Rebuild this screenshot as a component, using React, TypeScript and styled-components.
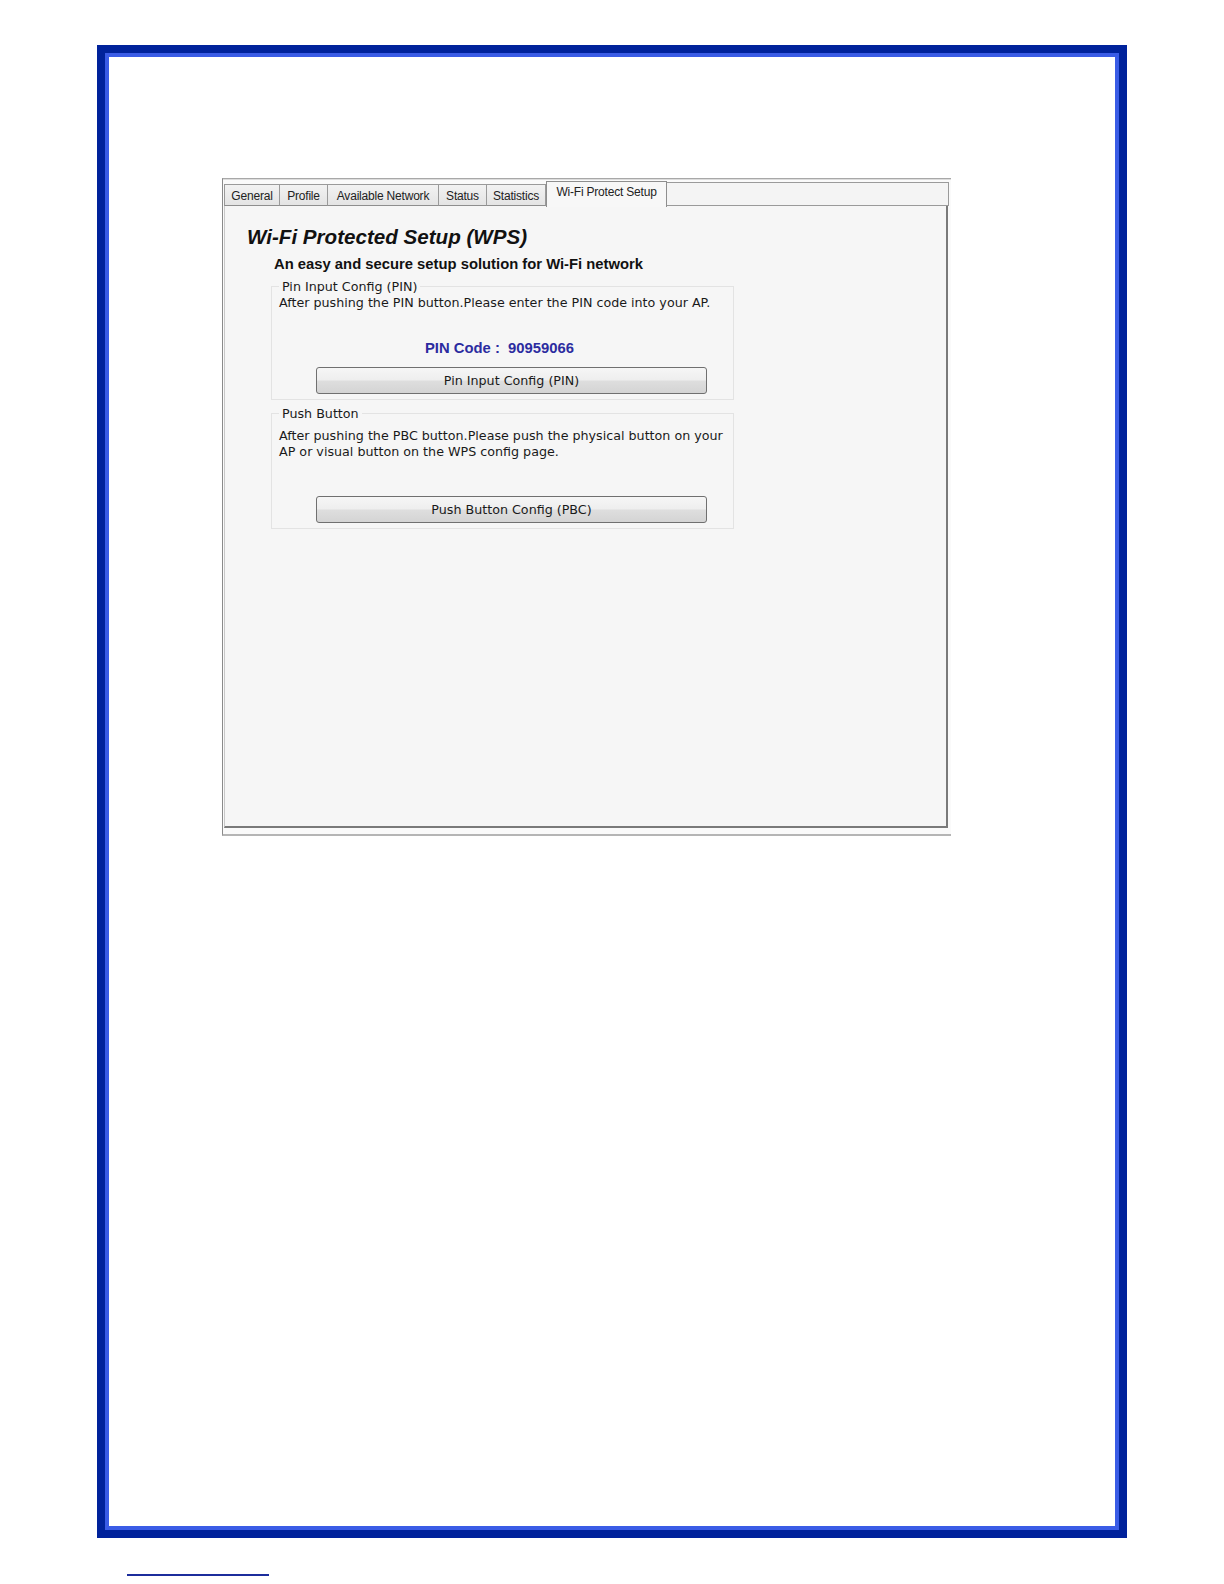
import React from "react";
import styled, { createGlobalStyle } from "styled-components";

const Global = createGlobalStyle`
  html, body { margin: 0; padding: 0; background: #ffffff; }
  #root { width: 1224px; }
`;

const Page = styled.div`
  width: 1224px;
  height: 1584px;
  box-sizing: border-box;
  padding: 45px 0 0 97px;
  background: #ffffff;
  display: flex;
  flex-direction: column;
`;

const Frame = styled.div`
  width: 1030px;
  height: 1493px;
  box-sizing: border-box;
  border: 8px solid #00229b;
  box-shadow: inset 0 0 0 4px #3a5ce6;
  padding: 125px 0 0 117px;
  background: #ffffff;
`;

const Window = styled.div`
  width: 729px;
  height: 658px;
  box-sizing: border-box;
  border-top: 1px solid #a8a8a8;
  box-shadow: inset 0 1px 0 #dcdcdc;
  border-left: 1px solid #8a8a8a;
  border-bottom: 2px solid #b5b5b5;
  padding: 0 2px 6px 1px;
  display: flex;
  flex-direction: column;
  background: #fafafa;
`;

const TabStrip = styled.div`
  height: 27px;
  display: flex;
  align-items: flex-end;
  font-family: "Liberation Sans", Arial, sans-serif;
`;

const Tab = styled.div<{ $w: number; $active?: boolean; $first?: boolean }>`
  width: ${(p) => p.$w}px;
  height: ${(p) => (p.$active ? 26 : 22)}px;
  box-sizing: border-box;
  border: 1px solid ${(p) => (p.$active ? "#8e8e8e" : "#9a9a9a")};
  border-bottom: ${(p) => (p.$active ? "none" : "1px solid #8e8e8e")};
  border-left-style: ${(p) => (p.$first || p.$active ? "solid" : "none")};
  background: ${(p) =>
    p.$active ? "#f7f7f7" : "linear-gradient(#f2f2f2, #e4e4e4)"};
  font-size: 12px;
  letter-spacing: -0.2px;
  color: #222;
  display: flex;
  align-items: ${(p) => (p.$active ? "flex-start" : "center")};
  padding-top: ${(p) => (p.$active ? 3 : 1)}px;
  justify-content: center;
  white-space: nowrap;
  margin-bottom: ${(p) => (p.$active ? -1 : 0)}px;
  position: relative;
  z-index: ${(p) => (p.$active ? 1 : 0)};
`;

const StripRest = styled.div`
  flex: 1;
  height: 24px;
  box-sizing: border-box;
  border: 1px solid #9a9a9a;
  border-left: none;
  background: #f4f4f4;
`;

const Body = styled.div`
  flex: 1;
  box-sizing: border-box;
  background: #f6f6f6;
  border-left: 1px solid #c8c8c8;
  border-right: 2px solid #7a7a7a;
  border-bottom: 2px solid #7a7a7a;
  margin-right: 1px;
  padding: 19px 0 0 22px;
  display: flex;
  flex-direction: column;
`;

const Title = styled.h1`
  margin: 0;
  font-family: "Liberation Sans", Arial, sans-serif;
  font-weight: bold;
  font-style: italic;
  font-size: 20.6px;
  line-height: 24px;
  color: #111;
`;

const Subtitle = styled.div`
  margin: 6px 0 0 27px;
  font-family: "Liberation Sans", Arial, sans-serif;
  font-weight: bold;
  font-size: 14.8px;
  line-height: 18px;
  color: #111;
`;

const Group = styled.fieldset<{ $h: number; $mt: number }>`
  margin: ${(p) => p.$mt}px 0 0 24px;
  width: 463px;
  height: ${(p) => p.$h}px;
  box-sizing: border-box;
  border: 1px solid #e3e3e3;
  padding: 0 6px 6px 7px;
  display: flex;
  flex-direction: column;
  font-family: "DejaVu Sans", Verdana, sans-serif;
  font-size: 12.7px;
  color: #1a1a1a;
`;

const Legend = styled.legend`
  padding: 0 3px;
  margin-left: 0;
  font-size: 12.7px;
  line-height: 15px;
  white-space: nowrap;
`;

const Desc = styled.div<{ $mt: number }>`
  margin-top: ${(p) => p.$mt}px;
  line-height: 16px;
  white-space: nowrap;
`;

const PinRow = styled.div`
  margin: 28px 0 0 146px;
  font-family: "Liberation Sans", Arial, sans-serif;
  font-weight: bold;
  font-size: 14.8px;
  line-height: 18px;
  color: #2c2ca0;
  white-space: pre;
`;

const Button = styled.button<{ $mt: number }>`
  margin: ${(p) => p.$mt}px 0 0 37px;
  width: 391px;
  height: 27px;
  box-sizing: border-box;
  border: 1px solid #707070;
  border-radius: 3px;
  background: linear-gradient(#f6f6f6 0%, #eeeeee 48%, #dedede 52%, #d4d4d4 100%);
  font-family: "DejaVu Sans", Verdana, sans-serif;
  font-size: 12.7px;
  color: #1a1a1a;
  padding: 0;
`;

const Footnote = styled.div`
  margin: 36px 0 0 30px;
  width: 142px;
  height: 2px;
  background: #1c2d9c;
`;

const tabs: [string, number][] = [
  ["General", 56],
  ["Profile", 48],
  ["Available Network", 111],
  ["Status", 48],
  ["Statistics", 59],
];

export default function App() {
  return (
    <>
      <Global />
      <Page>
        <Frame>
          <Window>
            <TabStrip>
              {tabs.map(([t, w], i) => (
                <Tab key={t} $w={w} $first={i === 0}>
                  {t}
                </Tab>
              ))}
              <Tab $w={121} $active>
                Wi-Fi Protect Setup
              </Tab>
              <StripRest />
            </TabStrip>
            <Body>
              <Title>Wi-Fi Protected Setup (WPS)</Title>
              <Subtitle>An easy and secure setup solution for Wi-Fi network</Subtitle>
              <Group $mt={6} $h={121}>
                <Legend>Pin Input Config (PIN)</Legend>
                <Desc $mt={1}>
                  After pushing the PIN button.Please enter the PIN code into your AP.
                </Desc>
                <PinRow>{"PIN Code :  90959066"}</PinRow>
                <Button $mt={10}>Pin Input Config (PIN)</Button>
              </Group>
              <Group $mt={6} $h={123}>
                <Legend>Push Button</Legend>
                <Desc $mt={7}>
                  After pushing the PBC button.Please push the physical button on your
                  <br />
                  AP or visual button on the WPS config page.
                </Desc>
                <Button $mt={36}>Push Button Config (PBC)</Button>
              </Group>
            </Body>
          </Window>
        </Frame>
        <Footnote />
      </Page>
    </>
  );
}
